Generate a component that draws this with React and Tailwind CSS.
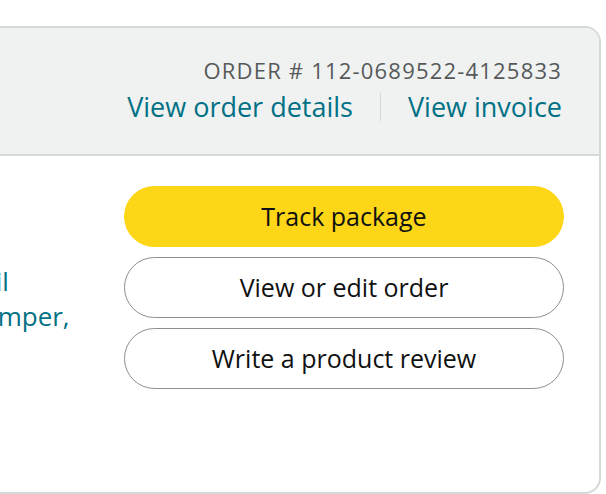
import React from 'react';

const font = { fontFamily: '"Open Sans", "Noto Sans", Arial, sans-serif' };

function ActionButton({ children, primary }) {
  return (
    <button
      className={
        primary
          ? 'h-[61px] w-full rounded-full bg-[#fcd617] text-[25px] text-[#0f1111]'
          : 'h-[61px] w-full rounded-full border-[1.5px] border-[#8d9090] bg-white text-[25px] text-[#0f1111]'
      }
    >
      {children}
    </button>
  );
}

export default function App() {
  return (
    <div className="w-[606px] h-[494px] overflow-hidden bg-white" style={font}>
      <div className="mt-[26px] ml-[-700px] w-[1301px] h-[468px] rounded-[16px] border-2 border-[#d5d9d9] overflow-hidden">
        {/* order header */}
        <div className="h-[128px] border-b-2 border-[#d5d9d9] bg-[#f0f2f2] pr-[37px] pt-[28px] flex flex-col items-end">
          <p className="text-[22px] leading-[28px] tracking-[1.2px] text-[#565959]">ORDER # 112-0689522-4125833</p>
          <div className="mt-[6px] flex items-center text-[27px] leading-[34px] text-[#007185]">
            <a>View order details</a>
            <span className="mx-[27px] h-[28px] w-[1px] bg-[#d5d9d9]" />
            <a>View invoice</a>
          </div>
        </div>

        {/* shipment body */}
        <div className="flex pt-[30px] pr-[35px]">
          <div className="flex-1 pl-[286px] pt-[78px] text-[26px] leading-[35px] text-[#007185] whitespace-nowrap">
            <div>Case for iPad 10th Gen. with Pencil</div>
            <div>Holder, Shockproof Cover with Bumper,</div>
          </div>
          <div className="w-[440px] flex flex-col gap-[10px]">
            <ActionButton primary>Track package</ActionButton>
            <ActionButton>View or edit order</ActionButton>
            <ActionButton>Write a product review</ActionButton>
          </div>
        </div>
      </div>
    </div>
  );
}
